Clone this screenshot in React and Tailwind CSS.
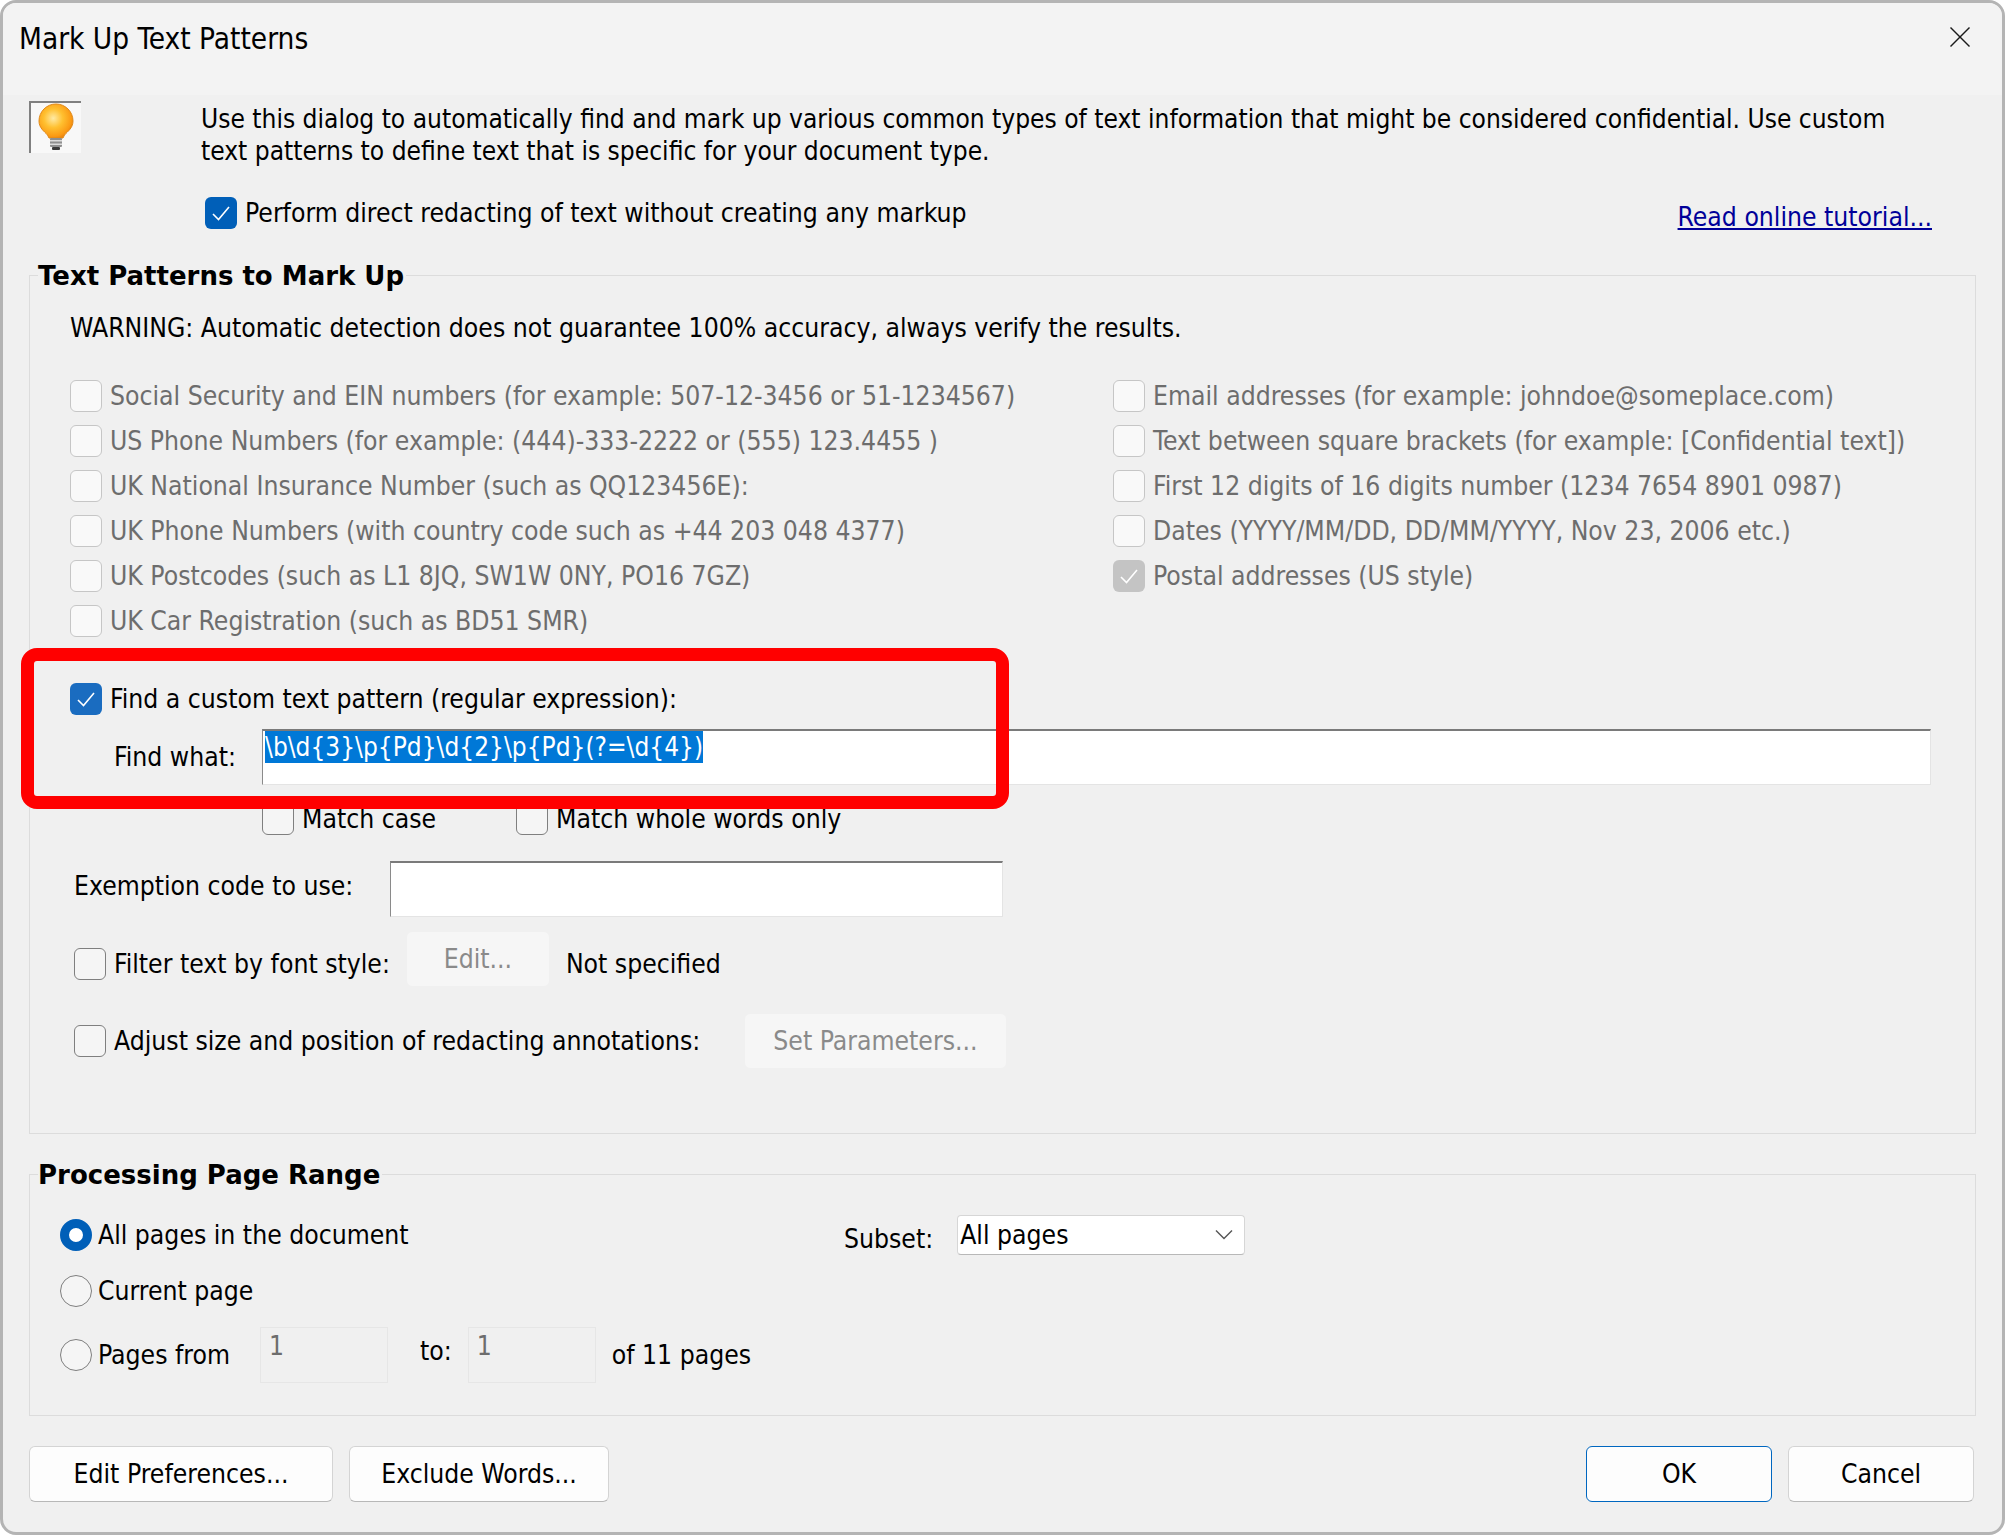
import React from 'react';

function Tick({ className }) {
  return (
    <svg viewBox="0 0 32 32" className={className} fill="none" stroke="white" strokeWidth="1.6">
      <polyline points="8,17 13.5,22.5 24,10" />
    </svg>
  );
}

function Box({ kind = 'off' }) {
  if (kind === 'on')
    return <span className="w-8 h-8 shrink-0 rounded-md bg-[#005fb8]"><Tick className="w-8 h-8" /></span>;
  if (kind === 'hot')
    return <span className="w-8 h-8 shrink-0 rounded-md bg-[#1a6cc0]"><Tick className="w-8 h-8" /></span>;
  if (kind === 'dim')
    return <span className="w-8 h-8 shrink-0 rounded-md bg-[#c4c4c4]"><Tick className="w-8 h-8" /></span>;
  if (kind === 'dimoff')
    return <span className="w-8 h-8 shrink-0 rounded-md border border-[#c6c6c6] bg-[#f9f9f9]" />;
  return <span className="w-8 h-8 shrink-0 rounded-md border border-[#7f7f7f] bg-[#f5f5f5]" />;
}

function Check({ kind, children, className = '' }) {
  const dim = kind === 'dim' || kind === 'dimoff';
  return (
    <label className={`flex items-center gap-2 ${dim ? 'text-[#6d6d6d]' : ''} ${className}`}>
      <Box kind={kind} />
      <span className="whitespace-nowrap">{children}</span>
    </label>
  );
}

function Radio({ on, children }) {
  return (
    <label className="flex items-center gap-1.5">
      {on ? (
        <span className="w-8 h-8 shrink-0 rounded-full border-[9px] border-[#005fb8] bg-white" />
      ) : (
        <span className="w-8 h-8 shrink-0 rounded-full border border-[#7f7f7f] bg-[#f5f5f5]" />
      )}
      <span className="whitespace-nowrap">{children}</span>
    </label>
  );
}

function Btn({ className = '', children }) {
  return (
    <button className={`h-14 rounded-md bg-[#fdfdfd] border border-[#d4d4d4] border-b-[#b8b8b8] ${className}`}>
      {children}
    </button>
  );
}

function DimBtn({ className = '', children }) {
  return (
    <button className={`h-14 rounded-md bg-[#f6f6f6] border border-[#f0f0f0] text-[#8a8a8a] ${className}`}>
      {children}
    </button>
  );
}

function Legend({ className = '', children }) {
  return (
    <div className={`w-fit pr-0.5 bg-[#f0f0f0] text-[26px] font-bold font-['DejaVu_Sans'] whitespace-nowrap ${className}`}>
      {children}
    </div>
  );
}

function Bulb() {
  return (
    <svg viewBox="2 2 50 50" className="w-full h-full">
      <defs>
        <radialGradient id="bulb" cx="42%" cy="42%" r="62%">
          <stop offset="0" stopColor="#ffeaa4" />
          <stop offset="0.45" stopColor="#ffc030" />
          <stop offset="0.85" stopColor="#fb9a14" />
          <stop offset="1" stopColor="#e8820e" />
        </radialGradient>
      </defs>
      <path
        d="M27 3a17 17 0 0 1 17 17c0 7-5 10-8.500 14l-1.500 3h-14l-1.500-3c-3.500-4-8.500-7-8.500-14a17 17 0 0 1 17-17z"
        fill="url(#bulb)"
        stroke="#e08a1a"
      />
      <rect x="21" y="37" width="12" height="9" rx="1" fill="#8f8f8f" />
      <rect x="21" y="39" width="12" height="1.500" fill="#dcdcdc" />
      <rect x="21" y="42.500" width="12" height="1.500" fill="#dcdcdc" />
      <rect x="23" y="46" width="8" height="3" rx="1" fill="#3a3a3a" />
    </svg>
  );
}

const leftRows = [
  'Social Security and EIN numbers (for example: 507-12-3456 or 51-1234567)',
  'US Phone Numbers (for example: (444)-333-2222 or (555) 123.4455 )',
  'UK National Insurance Number (such as QQ123456E):',
  'UK Phone Numbers (with country code such as +44 203 048 4377)',
  'UK Postcodes (such as L1 8JQ, SW1W 0NY, PO16 7GZ)',
  'UK Car Registration (such as BD51 SMR)',
];
const rightRows = [
  'Email addresses (for example: johndoe@someplace.com)',
  'Text between square brackets (for example: [Confidential text])',
  'First 12 digits of 16 digits number (1234 7654 8901 0987)',
  'Dates (YYYY/MM/DD, DD/MM/YYYY, Nov 23, 2006 etc.)',
  'Postal addresses (US style)',
];

const field = 'bg-white border-t-2 border-l border-r border-b border-t-[#7a7a7a] border-l-[#8a8a8a] border-r-[#e4e4e4] border-b-[#e4e4e4]';

export default function App() {
  return (
    <div className="h-screen w-full flex flex-col rounded-2xl border-3 border-[#b4b4b4] bg-[#f0f0f0] overflow-hidden text-black text-[26.3px] leading-8 font-['DejaVu_Sans_Condensed',sans-serif]">
      {/* title bar */}
      <div className="h-23 shrink-0 flex justify-between items-start pl-4 pr-8 pt-5 bg-[#f3f3f3]">
        <span className="text-[29.5px] leading-8">Mark Up Text Patterns</span>
        <svg viewBox="0 0 20 20" className="w-5 h-5 mt-1" stroke="#1a1a1a" strokeWidth="1.4">
          <line x1="0.5" y1="0.5" x2="19.5" y2="19.5" />
          <line x1="19.5" y1="0.5" x2="0.5" y2="19.5" />
        </svg>
      </div>

      <div className="flex-1 relative px-6.5">
        {/* intro */}
        <div className="flex pt-2">
          <div className="w-43 shrink-0">
            <div className="-mt-0.5 w-13 h-13 border-t-2 border-l-2 border-[#808080] bg-[#f8f8f8]">
              <Bulb />
            </div>
          </div>
          <div className="flex-1 min-w-0">
            <p className="pr-16 text-[26.1px]">
              Use this dialog to automatically find and mark up various common types of text information that might be considered confidential. Use custom text patterns to define text that is specific for your document type.
            </p>
            <div className="flex items-center justify-between mt-7 pl-1 pr-11">
              <Check kind="on">Perform direct redacting of text without creating any markup</Check>
              <a className="pt-1.5 -mb-0.5 underline text-[#000099] whitespace-nowrap">Read online tutorial...</a>
            </div>
          </div>
        </div>

        {/* text patterns */}
        <div className="mt-11 border border-[#dcdcdc] pl-10 pr-11 pb-16">
          <Legend className="-mt-4 -ml-8">Text Patterns to Mark Up</Legend>
          <div className="mt-5 whitespace-nowrap">WARNING: Automatic detection does not guarantee 100% accuracy, always verify the results.</div>
          <div className="mt-7.5 flex">
            <div className="w-[1043px] shrink-0 flex flex-col gap-px">
              {leftRows.map((t) => (
                <Check key={t} kind="dimoff" className="h-11">{t}</Check>
              ))}
            </div>
            <div className="flex flex-col gap-px">
              {rightRows.map((t, i) => (
                <Check key={t} kind={i === 4 ? 'dim' : 'dimoff'} className="h-11">{t}</Check>
              ))}
            </div>
          </div>

          <Check kind="hot" className="mt-10 h-8">Find a custom text pattern (regular expression):</Check>

          <div className="mt-3.5 flex items-center">
            <span className="w-48 pl-11 shrink-0">Find what:</span>
            <div className={`flex-1 h-14 pl-0.5 ${field}`}>
              <span className="inline-block bg-[#0078d7] text-white text-[26px] whitespace-nowrap">{'\\b\\d{3}\\p{Pd}\\d{2}\\p{Pd}(?=\\d{4})'}</span>
            </div>
          </div>

          <div className="mt-4.5 h-8 pl-48 flex items-center gap-20">
            <Check>Match case</Check>
            <Check>Match whole words only</Check>
          </div>

          <div className="mt-6.5 flex items-center">
            <span className="w-80 pl-1 mb-1.5 shrink-0">Exemption code to use:</span>
            <div className={`w-[613px] h-14 ${field}`} />
          </div>

          <div className="mt-3.5 pl-1 flex items-center">
            <Check>Filter text by font style:</Check>
            <DimBtn className="ml-4 mb-2.5 w-36">Edit...</DimBtn>
            <span className="ml-4">Not specified</span>
          </div>

          <div className="mt-4 pl-1 flex items-center">
            <Check>Adjust size and position of redacting annotations:</Check>
            <DimBtn className="ml-11 px-7">Set Parameters...</DimBtn>
          </div>
        </div>

        {/* page range */}
        <div className="mt-10 border border-[#dcdcdc] pl-7.5 pb-8">
          <Legend className="-mt-4 -ml-5.5">Processing Page Range</Legend>
          <div className="mt-6 h-10 flex items-center">
            <div className="w-196 shrink-0"><Radio on>All pages in the document</Radio></div>
            <span className="pt-2">Subset:</span>
            <div className="ml-6 w-72 h-10 flex items-center justify-between pl-0.5 pr-2.5 bg-white border border-[#d6d6d6] border-b-[#b8b8b8] rounded-sm">
              <span>All pages</span>
              <svg viewBox="0 0 20 12" className="w-5 h-3" fill="none" stroke="#555" strokeWidth="1.4">
                <polyline points="2,1.5 10,9.5 18,1.5" />
              </svg>
            </div>
          </div>
          <div className="mt-4 h-10 flex items-center"><Radio>Current page</Radio></div>
          <div className="mt-4 flex items-center">
            <Radio>Pages from</Radio>
            <div className="ml-7.5 w-32 h-14 pl-2 pt-0.5 border border-[#e6e6e6] text-[#6d6d6d]">1</div>
            <span className="ml-8 mb-2">to:</span>
            <div className="ml-4 w-32 h-14 pl-2 pt-0.5 border border-[#e6e6e6] text-[#6d6d6d]">1</div>
            <span className="ml-4">of 11 pages</span>
          </div>
        </div>

        {/* footer */}
        <div className="mt-7.5 flex gap-4 pr-0.5">
          <Btn className="w-76">Edit Preferences...</Btn>
          <Btn className="w-65">Exclude Words...</Btn>
          <button className="ml-auto w-46.5 h-14 rounded-md bg-[#fdfdfd] border border-[#0067c0]">OK</button>
          <Btn className="w-46.5">Cancel</Btn>
        </div>

        {/* red annotation drawn over the dialog */}
        <div className="absolute left-4.5 top-[553px] w-[988px] h-[161px] border-[13px] border-[#ff0000] rounded-2xl" />
      </div>
    </div>
  );
}
